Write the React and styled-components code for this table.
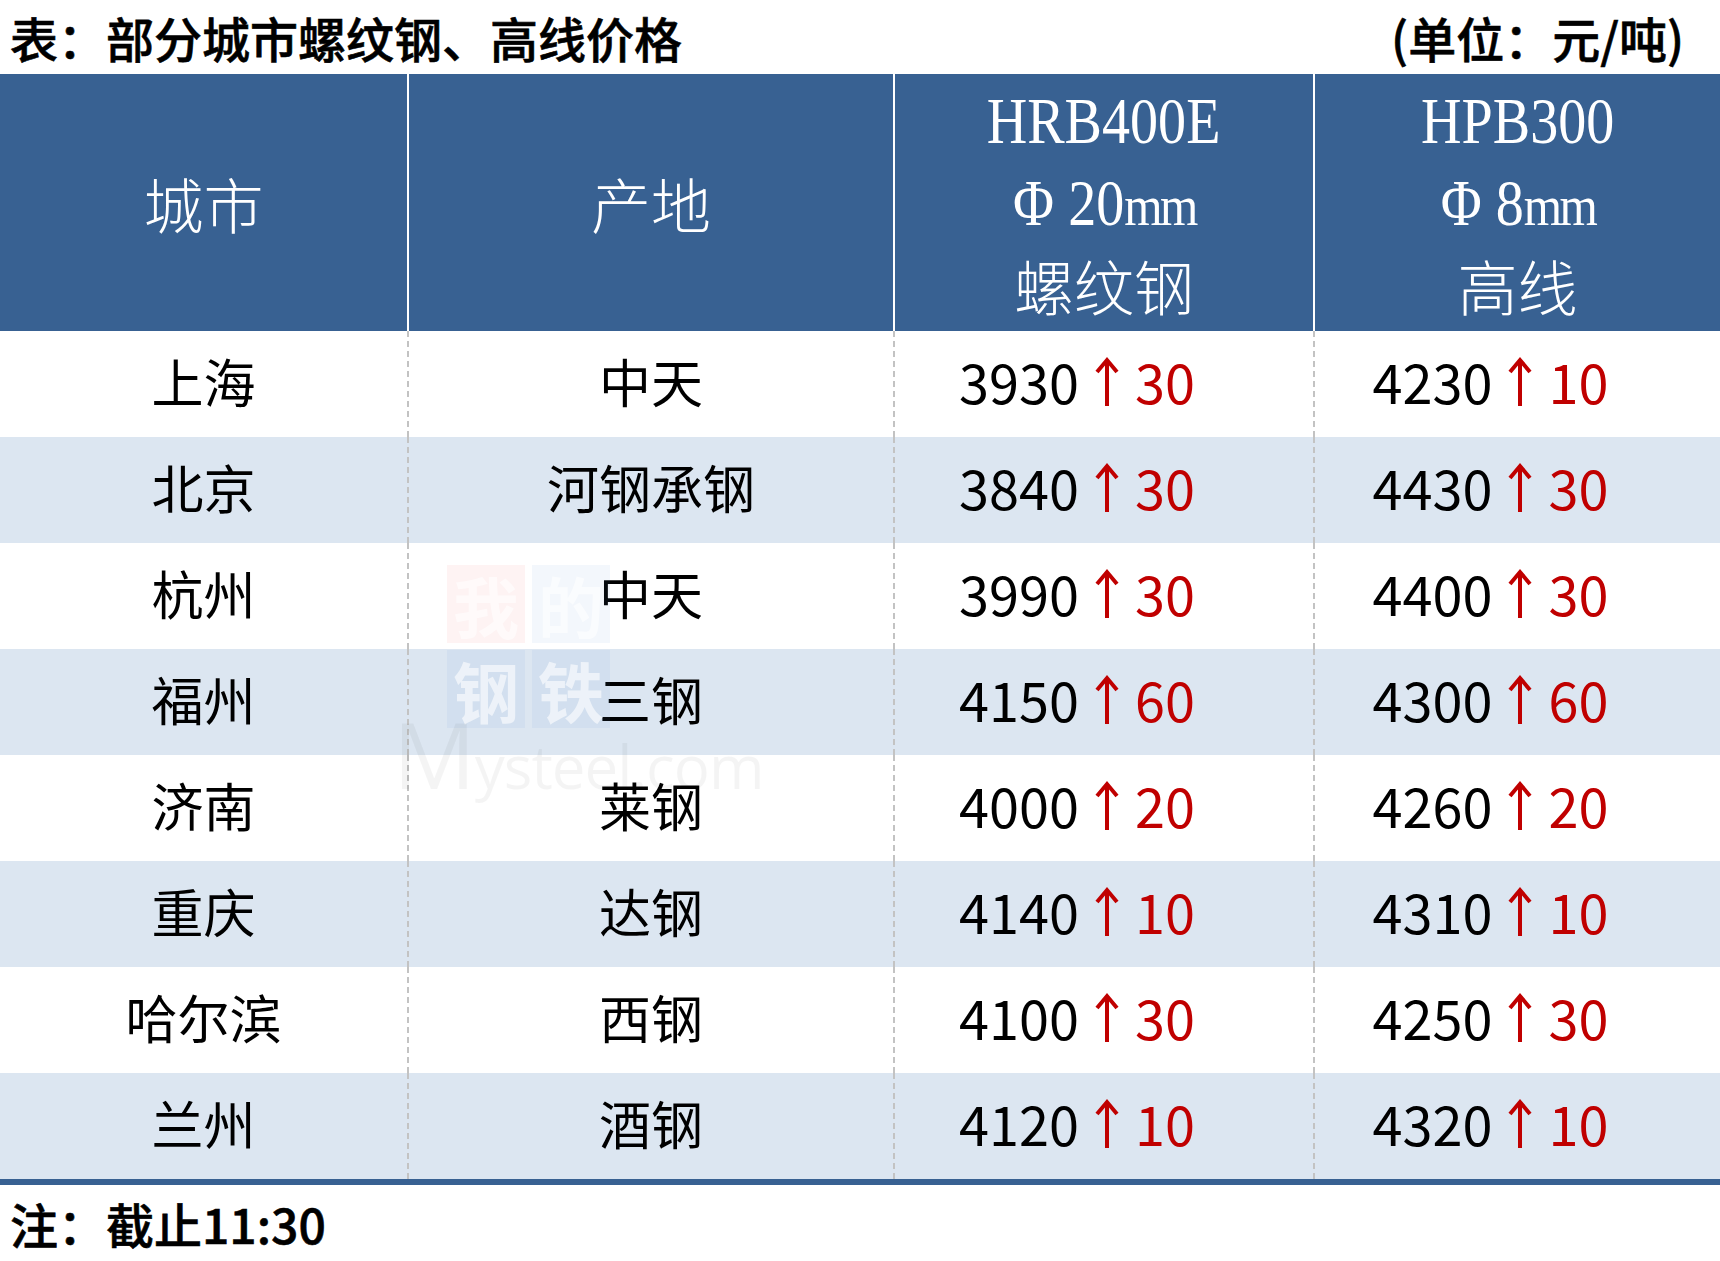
import React from "react";
import styled, { createGlobalStyle } from "styled-components";

const SANS = `"Noto Sans CJK SC", "Noto Sans", sans-serif`;
const SERIF = `"Liberation Serif", "Noto Sans CJK SC", serif`;
const BLUE = "#386192";
const STRIPE = "#dce6f1";
const RED = "#c00000";

const COLUMNS = "407px 486px 420px 407px";

const rows = [
  { city: "上海", origin: "中天", rebar: 3930, rebarUp: 30, wire: 4230, wireUp: 10 },
  { city: "北京", origin: "河钢承钢", rebar: 3840, rebarUp: 30, wire: 4430, wireUp: 30 },
  { city: "杭州", origin: "中天", rebar: 3990, rebarUp: 30, wire: 4400, wireUp: 30 },
  { city: "福州", origin: "三钢", rebar: 4150, rebarUp: 60, wire: 4300, wireUp: 60 },
  { city: "济南", origin: "莱钢", rebar: 4000, rebarUp: 20, wire: 4260, wireUp: 20 },
  { city: "重庆", origin: "达钢", rebar: 4140, rebarUp: 10, wire: 4310, wireUp: 10 },
  { city: "哈尔滨", origin: "西钢", rebar: 4100, rebarUp: 30, wire: 4250, wireUp: 30 },
  { city: "兰州", origin: "酒钢", rebar: 4120, rebarUp: 10, wire: 4320, wireUp: 10 },
];

const UpArrow = () => (
  <svg width="26" height="50" viewBox="0 0 26 50" aria-hidden="true">
    <path d="M13 4 L13 50" stroke={RED} strokeWidth="4" fill="none" />
    <path d="M3 16 L13 4 L23 16" stroke={RED} strokeWidth="4" fill="none" strokeLinejoin="miter" />
  </svg>
);

const Price = ({ value, up }) => (
  <PriceGroup>
    <span>{value}</span>
    <UpArrow />
    <Delta>{up}</Delta>
  </PriceGroup>
);

const App = () => {
  return (
    <Page>
      <GlobalStyle />
      <TitleBar>
        <Title>表：部分城市螺纹钢、高线价格</Title>
        <Title>(单位：元/吨)</Title>
      </TitleBar>

      <Table>
        <HeaderRow>
          <HeadCell>城市</HeadCell>
          <HeadCell $divider>产地</HeadCell>
          <HeadCell $divider>
            <HeadStack>
              <Latin>HRB400E</Latin>
              <Latin>Φ 20<Unit>mm</Unit></Latin>
              <HeadLine>螺纹钢</HeadLine>
            </HeadStack>
          </HeadCell>
          <HeadCell $divider>
            <HeadStack>
              <Latin>HPB300</Latin>
              <Latin>Φ 8<Unit>mm</Unit></Latin>
              <HeadLine>高线</HeadLine>
            </HeadStack>
          </HeadCell>
        </HeaderRow>

        <Body>
          {rows.map((r, i) => (
            <BodyRow key={r.city} $striped={i % 2 === 1}>
              <Cell>{r.city}</Cell>
              <Cell $divider>{r.origin}</Cell>
              <Cell $divider $value>
                <Price value={r.rebar} up={r.rebarUp} />
              </Cell>
              <Cell $divider $value>
                <Price value={r.wire} up={r.wireUp} />
              </Cell>
            </BodyRow>
          ))}
        </Body>

        <Watermark aria-hidden="true">
          <MarkGrid>
            <MarkTile $red>我</MarkTile>
            <MarkTile>的</MarkTile>
            <MarkTile>钢</MarkTile>
            <MarkTile>铁</MarkTile>
          </MarkGrid>
          <MarkWord>
            <MarkBig>M</MarkBig>ysteel.com
          </MarkWord>
        </Watermark>
      </Table>

      <Footer>注：截止11:30</Footer>
    </Page>
  );
};

const GlobalStyle = createGlobalStyle`
  html, body {
    margin: 0;
    padding: 0;
    background: #ffffff;
  }

  #root {
    width: 1720px;
  }

  * {
    box-sizing: border-box;
  }
`;

const Page = styled.div`
  width: 1720px;
  height: 1261px;
  background: #ffffff;
  font-family: ${SANS};
  color: #000;
`;

const TitleBar = styled.div`
  height: 74px;
  display: flex;
  align-items: center;
  justify-content: space-between;
  padding: 0 36px 0 10px;
`;

const Title = styled.div`
  font-size: 48px;
  font-weight: 500;
  line-height: 1;
  -webkit-text-stroke: 0.6px #000;
`;

const Table = styled.div`
  position: relative;
`;

const HeaderRow = styled.div`
  display: grid;
  grid-template-columns: ${COLUMNS};
  height: 257px;
  background: ${BLUE};
`;

const HeadCell = styled.div`
  display: flex;
  align-items: center;
  justify-content: center;
  color: #ffffff;
  font-size: 60px;
  font-weight: 300;
  border-left: ${(p) => (p.$divider ? "2px solid #ffffff" : "none")};
`;

const HeadStack = styled.div`
  display: flex;
  flex-direction: column;
  align-items: center;
`;

const HeadLine = styled.div`
  height: 82px;
  line-height: 82px;
  font-size: 60px;
`;

const Latin = styled.div`
  height: 82px;
  line-height: 82px;
  font-family: ${SERIF};
  font-size: 66px;
  transform: scaleX(0.85);
  white-space: nowrap;
`;

const Unit = styled.span`
  font-size: 58px;
  letter-spacing: -3px;
`;

const Body = styled.div`
  border-bottom: 6px solid ${BLUE};
`;

const BodyRow = styled.div`
  display: grid;
  grid-template-columns: ${COLUMNS};
  height: 106px;
  background: ${(p) => (p.$striped ? STRIPE : "#ffffff")};
`;

const Cell = styled.div`
  display: flex;
  align-items: center;
  justify-content: center;
  font-size: 52px;
  line-height: 1;
  padding-bottom: 6px;
  padding-right: ${(p) => (p.$value ? "54px" : "0")};
  border-left: ${(p) => (p.$divider ? "2px dashed #c3c3c3" : "none")};
`;

const PriceGroup = styled.div`
  display: flex;
  align-items: center;
  gap: 15px;
  font-size: 54px;
  line-height: 1;
`;

const Delta = styled.span`
  color: ${RED};
`;

const Watermark = styled.div`
  position: absolute;
  left: 393px;
  top: 491px;
  width: 370px;
  pointer-events: none;
  display: flex;
  flex-direction: column;
  align-items: flex-start;
`;

const MarkGrid = styled.div`
  display: grid;
  grid-template-columns: 78px 78px;
  gap: 7px;
  margin-left: 54px;
`;

const MarkTile = styled.div`
  width: 78px;
  height: 78px;
  display: flex;
  align-items: center;
  justify-content: center;
  font-size: 66px;
  font-weight: 700;
  color: rgba(255, 255, 255, 0.6);
  background: ${(p) => (p.$red ? "rgba(240, 90, 90, 0.07)" : "rgba(90, 140, 210, 0.07)")};
`;

const MarkWord = styled.div`
  margin-top: -20px;
  font-family: "Open Sans", "Liberation Sans", sans-serif;
  font-size: 60px;
  font-weight: 400;
  line-height: 1;
  letter-spacing: -1px;
  color: rgba(0, 0, 0, 0.045);
  white-space: nowrap;
`;

const MarkBig = styled.span`
  font-size: 92px;
`;

const Footer = styled.div`
  height: 75px;
  display: flex;
  align-items: center;
  padding-left: 10px;
  font-size: 48px;
  font-weight: 500;
  line-height: 1;
  -webkit-text-stroke: 0.6px #000;
`;

export default App;
